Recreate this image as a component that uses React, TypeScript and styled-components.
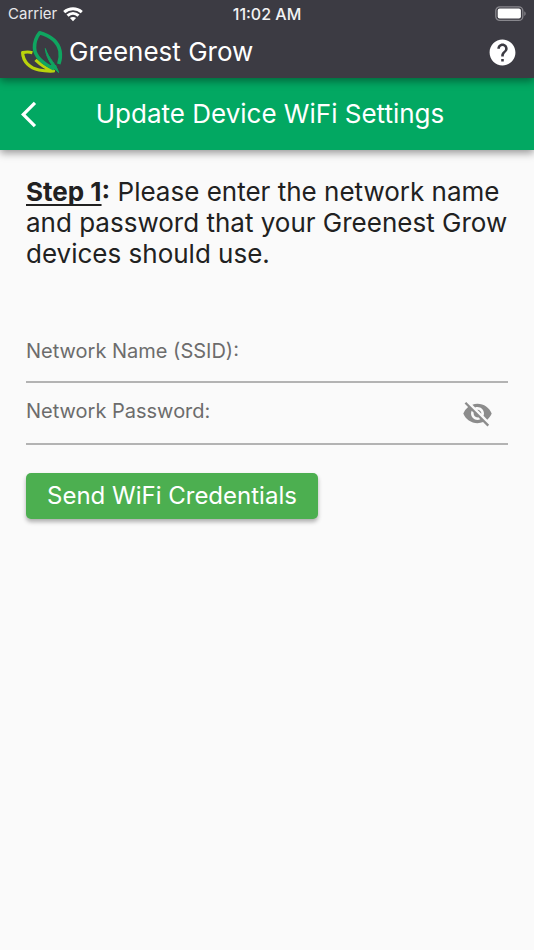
import React, { useState } from "react";
import styled, { createGlobalStyle } from "styled-components";
import { MdHelp, MdVisibility, MdVisibilityOff, MdArrowBackIos } from "react-icons/md";

const GlobalStyle = createGlobalStyle`
  *, *::before, *::after { box-sizing: border-box; }
  body {
    margin: 0;
    background: #fafafa;
    color: #212121;
    font-family: Inter, "Liberation Sans", sans-serif;
  }
`;

const Screen = styled.div`
  display: flex;
  flex-direction: column;
  min-height: 100vh;
`;

const TopBar = styled.header`
  position: relative;
  z-index: 2;
  background: #3c3b43;
  color: #fff;
  box-shadow: 0 3px 8px rgba(0, 0, 0, 0.4);
`;

const StatusBar = styled.div`
  display: grid;
  grid-template-columns: 1fr auto 1fr;
  align-items: center;
  height: 26px;
  padding: 2px 8px 0;
  font-size: 15px;
  line-height: 24px;
`;

const Carrier = styled.div`
  display: flex;
  align-items: center;
  gap: 6px;
  color: #e8e8ea;
`;

const Clock = styled.time`
  font-size: 16px;
  font-weight: 500;
  color: #f2f2f3;
`;

const BatterySlot = styled.div`
  display: flex;
  justify-content: flex-end;
`;

const BrandRow = styled.div`
  display: flex;
  align-items: center;
  height: 52px;
  padding: 0 16px 0 20px;
`;

const Brand = styled.h1`
  flex: 1;
  margin: 0 0 0 5px;
  font-size: 26px;
  line-height: 32px;
  font-weight: 400;
`;

const IconButton = styled.button`
  display: flex;
  align-items: center;
  justify-content: center;
  padding: 0;
  border: 0;
  background: none;
  color: inherit;
  cursor: pointer;
`;

const TitleBar = styled.nav`
  position: relative;
  z-index: 1;
  display: grid;
  grid-template-columns: 36px 1fr 30px;
  align-items: center;
  height: 72px;
  padding: 0 18px;
  background: #02a862;
  color: #fff;
  box-shadow: 0 3px 8px rgba(0, 0, 0, 0.4);
`;

const Title = styled.h2`
  margin: 0;
  font-size: 26px;
  line-height: 32px;
  font-weight: 400;
  text-align: center;
  white-space: nowrap;
`;

const Content = styled.main`
  padding: 26px 26px 32px;
`;

const Instructions = styled.p`
  margin: 0 0 54px;
  font-size: 26px;
  line-height: 31px;
`;

const StepName = styled.strong`
  text-decoration: underline;
  text-decoration-thickness: 2px;
  text-underline-offset: 3px;
  text-decoration-skip-ink: none;
`;

const Form = styled.form`
  display: flex;
  flex-direction: column;
  align-items: stretch;
`;

const Field = styled.div<{ $height: number }>`
  display: grid;
  grid-template-columns: 1fr auto;
  align-items: start;
  height: ${(p) => p.$height}px;
  padding-top: 12px;
  border-bottom: 2px solid #b3b3b3;
`;

const Input = styled.input`
  grid-area: 1 / 1;
  width: 100%;
  height: 32px;
  padding: 0;
  border: 0;
  outline: 0;
  background: none;
  color: #212121;
  font: inherit;
  font-size: 20px;
`;

const Label = styled.label`
  grid-area: 1 / 1;
  font-size: 20px;
  line-height: 32px;
  color: #6c6c6c;
  cursor: text;

  ${Input}:focus + &,
  ${Input}:not(:placeholder-shown) + & {
    visibility: hidden;
  }
`;

const RevealButton = styled(IconButton)`
  grid-area: 1 / 2;
  width: 62px;
  height: 36px;
  color: #8c8c8c;
`;

const SubmitButton = styled.button`
  align-self: flex-start;
  margin-top: 28px;
  height: 46px;
  padding: 0 21px;
  border: 0;
  border-radius: 5px;
  background: #4caf50;
  color: #fff;
  font-family: inherit;
  font-size: 24px;
  font-weight: 400;
  line-height: 32px;
  box-shadow: 0 3px 4px rgba(0, 0, 0, 0.3);
  cursor: pointer;
`;

const LeafLogo = () => (
  <svg width="44" height="44" viewBox="0 0 44 44" fill="none" aria-hidden="true">
    <path d="M12.4 22.7C9.5 21.8 6 21.8 2.6 22.6C3 32 10 38 19 40C24 41 29 41.2 33.5 41C28 39.4 21 35 15.5 29.8" stroke="#b9d30c" strokeWidth="3.2" strokeLinejoin="round" />
    <path d="M34 39C24 34 14.8 27.5 14.5 18C14.3 11 17 6 19.6 2.8C29 5.5 38 11.5 40 21C41 26.5 40 30.5 38.8 34" stroke="#0fa560" strokeWidth="3.6" strokeLinejoin="round" />
    <path d="M25.3 18.5C26 26.5 30 34 38.6 42.6C36.8 35 28.5 28.5 25.3 18.5Z" fill="#0fa560" stroke="#0fa560" />
    <path d="M29 35L38.6 42.6L36 35Z" fill="#0fa560" />
  </svg>
);

const WifiIcon = () => (
  <svg width="20" height="15" viewBox="0 0 20 15" fill="none" stroke="#fff" strokeWidth="3" aria-hidden="true">
    <path d="M1.2 5.1C6.2 0.6 13.8 0.6 18.8 5.1" />
    <path d="M4.5 8.7C7.7 5.8 12.3 5.8 15.5 8.7" />
    <path d="M6.9 11.1C8.7 9.6 11.3 9.6 13.1 11.1L10 14.3Z" fill="#fff" stroke="none" />
  </svg>
);

const BatteryIcon = () => (
  <svg width="31" height="16" viewBox="0 0 31 16" aria-hidden="true">
    <rect x="0.8" y="0.8" width="27" height="13.6" rx="4" fill="none" stroke="#88878d" strokeWidth="1.3" />
    <rect x="2.7" y="2.6" width="23.2" height="10" rx="2" fill="#fff" />
    <path d="M29.3 5.2C31.1 6 31.1 9.2 29.3 10Z" fill="#88878d" />
  </svg>
);

export default function App() {
  const [visible, setVisible] = useState(false);

  return (
    <>
      <GlobalStyle />
      <Screen>
        <TopBar>
          <StatusBar>
            <Carrier>
              Carrier
              <WifiIcon />
            </Carrier>
            <Clock>11:02 AM</Clock>
            <BatterySlot>
              <BatteryIcon />
            </BatterySlot>
          </StatusBar>
          <BrandRow>
            <LeafLogo />
            <Brand>Greenest Grow</Brand>
            <IconButton type="button" aria-label="Help">
              <MdHelp size={31} />
            </IconButton>
          </BrandRow>
        </TopBar>
        <TitleBar>
          <IconButton type="button" aria-label="Back">
            <MdArrowBackIos size={31} />
          </IconButton>
          <Title>Update Device WiFi Settings</Title>
        </TitleBar>
        <Content>
          <Instructions>
            <StepName>Step 1</StepName>
            <strong>:</strong> Please enter the network name and password that your Greenest Grow
            devices should use.
          </Instructions>
          <Form onSubmit={(e) => e.preventDefault()}>
            <Field $height={60}>
              <Input id="ssid" type="text" placeholder=" " />
              <Label htmlFor="ssid">Network Name (SSID):</Label>
            </Field>
            <Field $height={62}>
              <Input id="password" type={visible ? "text" : "password"} placeholder=" " />
              <Label htmlFor="password">Network Password:</Label>
              <RevealButton
                type="button"
                aria-label={visible ? "Hide password" : "Show password"}
                onClick={() => setVisible(!visible)}
              >
                {visible ? <MdVisibility size={31} /> : <MdVisibilityOff size={31} />}
              </RevealButton>
            </Field>
            <SubmitButton type="submit">Send WiFi Credentials</SubmitButton>
          </Form>
        </Content>
      </Screen>
    </>
  );
}
